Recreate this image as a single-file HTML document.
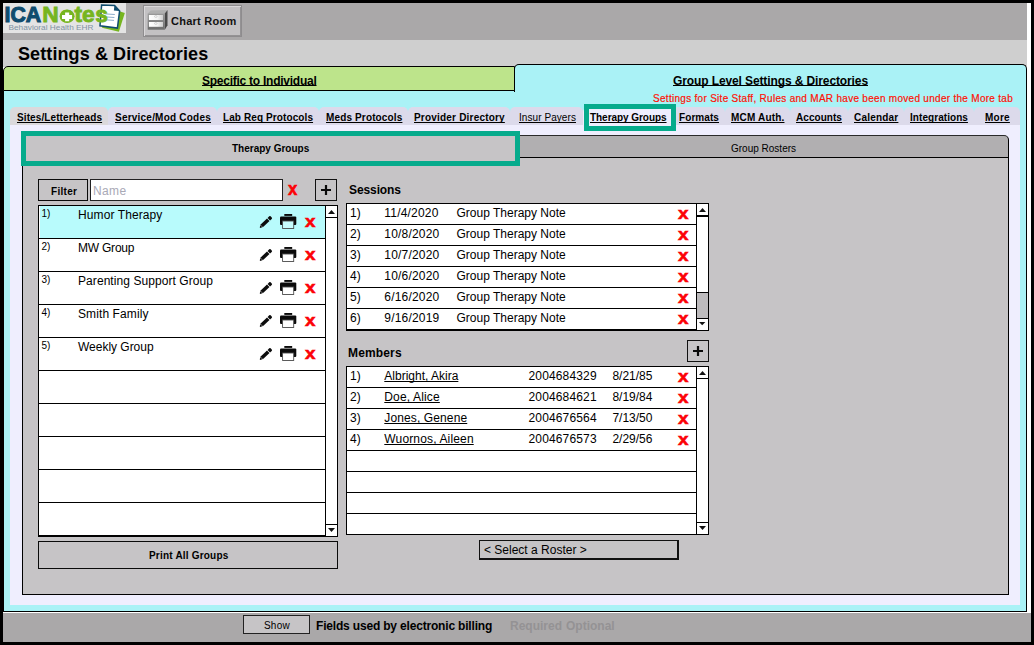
<!DOCTYPE html>
<html><head><meta charset="utf-8"><title>Settings &amp; Directories</title>
<style>
*{box-sizing:border-box;margin:0;padding:0}
html,body{width:1034px;height:645px;overflow:hidden;background:#000}
body{position:relative;font-family:"Liberation Sans",Arial,sans-serif;font-size:12px;color:#000}
.abs{position:absolute}
.t{position:absolute;white-space:nowrap;line-height:1}
.b{font-weight:bold}
.u{text-decoration:underline;text-underline-offset:0px;text-decoration-thickness:1px;text-decoration-skip-ink:none}
.n12.u{text-underline-offset:1px}
#white{left:3px;top:3px;width:1028px;height:610px;background:#fff}
#topbar{left:3px;top:3px;width:1024px;height:37px;background:#aaa8a9}
#logo{left:3px;top:3px;width:123px;height:30px;background:#e4e4e4;overflow:hidden}
#chart{left:143px;top:5px;width:99px;height:32px;background:#c3c1c3;border:1px solid #8e8c8e;box-shadow:inset 1px 1px 0 #dad8da,inset -1px -1px 0 #949294}
#titlebar{left:3px;top:40px;width:1024px;height:27px;background:#cfcfcf}
#cyan{left:3px;top:90px;width:1024px;height:522px;background:#aaf2f6;border:1px solid #000;border-top:none}
#cyantab{left:514px;top:64px;width:513px;height:28px;background:#aaf2f6;border:1px solid #000;border-bottom:none;border-radius:5px 5px 0 0}
#greentab{left:3px;top:66px;width:512px;height:25px;background:#bde48b;border:1px solid #000;border-radius:5px 0 0 0}
#lav{left:10px;top:125px;width:1010px;height:480px;background:#efeefe}
.tab{position:absolute;top:107px;height:18px;background:#dcdaeb;border-radius:5px 5px 0 0}
.tab.sel{background:#efeefe}
.tl{position:absolute;top:113px;font-size:10px;font-weight:bold;text-decoration:underline;text-decoration-skip-ink:none;white-space:nowrap;line-height:1}
#panel{left:22px;top:157px;width:987px;height:438px;background:#c6c4c6;border:1px solid #000}
#sub1{left:22px;top:135px;width:494px;height:23px;background:#c6c4c6;border:1px solid #000;border-bottom:none}
#sub2{left:515px;top:135px;width:494px;height:22px;background:#b1afb1;border:1px solid #000;border-top-color:#2a2a2a;border-bottom:none;border-radius:0 5px 0 0}
.hl{position:absolute;border:5px solid #06ab8c}
.btn{position:absolute;background:#c6c4c6;border:1px solid #0a0a0a}
.list{position:absolute;background:#fff;border:1px solid #000;overflow:hidden}
.row{position:absolute;left:0;border-bottom:1px solid #000}
.sb{position:absolute;top:0;right:0;width:12px;height:100%;border-left:1px solid #000;background:#fff}
.rx{position:absolute;color:#fc0206;font-weight:bold;line-height:1;-webkit-text-stroke:0.6px #fc0206}

.n9{position:absolute;font-size:10px;line-height:1;white-space:nowrap}
.n12{position:absolute;font-size:12px;line-height:1;white-space:nowrap}
.arrbox{position:absolute;left:0;width:11px;height:12px;background:#fff}
svg{position:absolute;overflow:visible}
</style></head><body>
<div id="white" class="abs"></div>
<div id="topbar" class="abs"></div>
<div id="logo" class="abs"><svg style="left:0;top:0" width="123" height="30" viewBox="3 3 123 30">
<path d="M119.5 11.3 L124.8 12.9 L118.9 31.8 L102 27.8 L103 25 Z" fill="#76b51f"/>
<path d="M101.6 5 L114.6 5.6 L119.6 10.9 L117.4 28.1 L100 25.8 Z" fill="#fff" stroke="#0f4c6e" stroke-width="1.5" stroke-linejoin="miter"/>
<path d="M114.4 5.6 L113.9 10.4 L119.4 11 Z" fill="#0f4c6e"/>
<path d="M105.2 13.9 L114.8 14.5 M107 17 L114.4 17.5 M107.2 19.9 L114 20.4" stroke="#7fa3c4" stroke-width="0.9" fill="none"/>
<text x="4.5" y="22.2" style="font:bold 22.2px 'Liberation Sans',Arial,sans-serif" fill="#0f4c6e" stroke="#0f4c6e" stroke-width="1.1" textLength="36.6" lengthAdjust="spacingAndGlyphs">ICA</text>
<text x="42.3 60 74.6 82.1 95.3" y="22.1" style="font:bold 22.8px 'Liberation Sans',Arial,sans-serif" fill="#76b51f" stroke="#76b51f" stroke-width="0.9">Notes</text>
<ellipse cx="67.1" cy="16.3" rx="7.5" ry="6.6" fill="#76b51f"/>
<path d="M65.1 12.4h4.1v2.5h2.9v4.2h-2.9v2.1h-4.1v-2.1h-3.1v-4.2h3.1z" fill="#fff"/>
<text x="8.5" y="29.8" style="font:7.4px 'Liberation Sans',Arial,sans-serif" fill="#8193a3" textLength="85" lengthAdjust="spacingAndGlyphs">Behavioral Health EHR</text>
</svg></div>
<div id="chart" class="abs"></div>
<svg style="left:143px;top:5px" width="30" height="32" viewBox="143 5 30 32">
<defs><linearGradient id="cf" x1="0" y1="0" x2="0" y2="1"><stop offset="0" stop-color="#9a9a9a"/><stop offset="1" stop-color="#6c6c6c"/></linearGradient>
<linearGradient id="cd" x1="0" y1="0" x2="1" y2="0"><stop offset="0" stop-color="#fff"/><stop offset="0.6" stop-color="#f4f4f4"/><stop offset="1" stop-color="#cfcfcf"/></linearGradient></defs>
<path d="M147.7 13.5 L150.7 10.5 L167.5 10 L164.8 13.5 Z" fill="#b0b0b0"/>
<path d="M164.8 13.5 L167.5 10 L167.5 25.3 L164.8 29.7 Z" fill="#484848"/>
<rect x="147.7" y="13.5" width="17.1" height="16.2" fill="url(#cf)"/>
<rect x="148.9" y="15" width="14.1" height="5" fill="url(#cd)"/>
<rect x="148.9" y="22" width="14.1" height="4.8" fill="url(#cd)"/>
<rect x="154.6" y="15.6" width="2.4" height="1.7" rx="0.8" fill="#fff" stroke="#aaa" stroke-width="0.5"/>
<rect x="154.6" y="22.6" width="2.4" height="1.7" rx="0.8" fill="#fff" stroke="#aaa" stroke-width="0.5"/>
</svg>
<div class="t b" style="left:171px;top:16px;font-size:11px;letter-spacing:0.25px;color:#111">Chart Room</div>
<div id="titlebar" class="abs"></div>
<div class="t b" style="left:18px;top:45px;font-size:18px;letter-spacing:0.1px">Settings &amp; Directories</div>
<div id="cyan" class="abs"></div>
<div id="cyantab" class="abs"></div>
<div id="greentab" class="abs"></div>
<div id="lav" class="abs"></div>
<div class="tab" style="left:10px;width:98px;background:#dbd9dc"></div>
<div class="tl" style="left:17px;letter-spacing:0.1px">Sites/Letterheads</div>
<div class="tab" style="left:108px;width:109px"></div>
<div class="tl" style="left:115px;letter-spacing:0.22px">Service/Mod Codes</div>
<div class="tab" style="left:217px;width:102px"></div>
<div class="tl" style="left:223px;letter-spacing:0.1px">Lab Req Protocols</div>
<div class="tab" style="left:319px;width:89px"></div>
<div class="tl" style="left:326px;letter-spacing:0.14px">Meds Protocols</div>
<div class="tab" style="left:408px;width:102px"></div>
<div class="tl" style="left:414px;letter-spacing:0.2px">Provider Directory</div>
<div class="tab" style="left:510px;width:73px"></div>
<div class="tl" style="left:519px;font-weight:normal;letter-spacing:0.07px">Insur Payers</div>
<div class="tab sel" style="left:583px;width:90px"></div>
<div class="tl" style="left:590px;letter-spacing:-0.05px">Therapy Groups</div>
<div class="tab" style="left:673px;width:52px"></div>
<div class="tl" style="left:679px;letter-spacing:0.08px">Formats</div>
<div class="tab" style="left:725px;width:65px"></div>
<div class="tl" style="left:731px;letter-spacing:0.18px">MCM Auth.</div>
<div class="tab" style="left:790px;width:58px"></div>
<div class="tl" style="left:796px;letter-spacing:0.05px">Accounts</div>
<div class="tab" style="left:848px;width:56px"></div>
<div class="tl" style="left:854px;letter-spacing:0.2px">Calendar</div>
<div class="tab" style="left:904px;width:70px"></div>
<div class="tl" style="left:910px;letter-spacing:0.06px">Integrations</div>
<div class="tab" style="left:974px;width:46px"></div>
<div class="tl" style="left:985px;letter-spacing:0.25px">More</div>
<div id="panel" class="abs"></div>
<div id="sub1" class="abs"></div>
<div id="sub2" class="abs"></div>

<div class="t b u" style="left:202px;top:75px;font-size:12px;letter-spacing:-0.25px">Specific to Individual</div>
<div class="t b u" style="left:673px;top:75px;font-size:12px;letter-spacing:-0.11px">Group Level Settings &amp; Directories</div>
<div class="t" style="left:653px;top:94px;font-size:10px;letter-spacing:0.29px;color:#ff1206;-webkit-text-stroke:0.2px #ff1206">Settings for Site Staff, Rules and MAR have been moved under the More tab</div>
<div class="hl" style="left:584px;top:104px;width:92px;height:27px"></div>
<div class="hl" style="left:21px;top:131px;width:499px;height:35px"></div>
<div class="t b" style="left:232px;top:144px;font-size:10px">Therapy Groups</div>
<div class="t" style="left:731px;top:144px;font-size:10px">Group Rosters</div>
<div class="btn" style="left:38px;top:179px;width:50px;height:22px"></div>
<div class="t b" style="left:51px;top:187px;font-size:10px;letter-spacing:0.3px">Filter</div>
<div class="abs" style="left:90px;top:179px;width:193px;height:22px;background:#fff;border:1px solid #222"></div>
<div class="t" style="left:93px;top:185px;font-size:12px;letter-spacing:0.35px;color:#a9a9b6">Name</div>
<div class="rx" style="left:288px;top:180px;font-size:18px;transform:scaleX(0.93);transform-origin:0 0">x</div>
<div class="btn" style="left:315px;top:179px;width:22px;height:22px;border:1.5px solid #111"></div>
<svg style="left:321px;top:185px" width="10" height="10" viewBox="0 0 10 10"><path d="M3.9 0h2.2v3.9h3.9v2.2h-3.9v3.9h-2.2v-3.9h-3.9v-2.2h3.9z" fill="#0a0a0a"/></svg>
<div class="list" style="left:38px;top:205px;width:300px;height:332px">
<div class="row" style="top:0px;width:288px;height:33px;background:#b8fbfc;box-shadow:inset 1px 0 0 #fff">
<div class="n9" style="left:2.5px;top:3px">1)</div>
<div class="n12" style="left:39px;top:3px;letter-spacing:0.1px">Humor Therapy</div>
<svg style="left:0;top:0" width="1" height="1"><g transform="translate(221.2 21.4) rotate(-43.6)"><path d="M-0.2 -0.5L2.7 -1.8L11.1 -1.8L11.1 1.8L2.7 1.8L-0.2 0.5Z" fill="#0c0c0c"/><path d="M11.9 -1.8L14.2 -1.8Q15.2 -1.8 15.2 -0.8L15.2 0.8Q15.2 1.8 14.2 1.8L11.9 1.8Z" fill="#0c0c0c"/><path d="M1.9 -1.2L1.9 1.2" stroke="#eee" stroke-width="0.5" fill="none"/></g></svg>
<svg style="left:241px;top:8px" width="16.3" height="15" viewBox="0 0 17 15" preserveAspectRatio="none"><rect x="4.5" y="0" width="8.2" height="1.9" fill="#0a0a0a"/><rect x="0" y="2.4" width="17" height="8.6" rx="1.1" fill="#0a0a0a"/><rect x="2.7" y="7" width="11.6" height="7.5" fill="#c8fcfc" stroke="#4a4a4a" stroke-width="0.9"/></svg>
<div class="rx" style="left:266.2px;top:7px;font-size:17px;transform:translateY(-0.5px) scaleX(1.11);transform-origin:0 0">x</div>
</div>
<div class="row" style="top:33px;width:288px;height:33px;background:#fff">
<div class="n9" style="left:2.5px;top:3px">2)</div>
<div class="n12" style="left:39px;top:3px;letter-spacing:-0.22px">MW Group</div>
<svg style="left:0;top:0" width="1" height="1"><g transform="translate(221.2 21.4) rotate(-43.6)"><path d="M-0.2 -0.5L2.7 -1.8L11.1 -1.8L11.1 1.8L2.7 1.8L-0.2 0.5Z" fill="#0c0c0c"/><path d="M11.9 -1.8L14.2 -1.8Q15.2 -1.8 15.2 -0.8L15.2 0.8Q15.2 1.8 14.2 1.8L11.9 1.8Z" fill="#0c0c0c"/><path d="M1.9 -1.2L1.9 1.2" stroke="#eee" stroke-width="0.5" fill="none"/></g></svg>
<svg style="left:241px;top:8px" width="16.3" height="15" viewBox="0 0 17 15" preserveAspectRatio="none"><rect x="4.5" y="0" width="8.2" height="1.9" fill="#0a0a0a"/><rect x="0" y="2.4" width="17" height="8.6" rx="1.1" fill="#0a0a0a"/><rect x="2.7" y="7" width="11.6" height="7.5" fill="#fff" stroke="#4a4a4a" stroke-width="0.9"/></svg>
<div class="rx" style="left:266.2px;top:7px;font-size:17px;transform:translateY(-0.5px) scaleX(1.11);transform-origin:0 0">x</div>
</div>
<div class="row" style="top:66px;width:288px;height:33px;background:#fff">
<div class="n9" style="left:2.5px;top:3px">3)</div>
<div class="n12" style="left:39px;top:3px;letter-spacing:0.07px">Parenting Support Group</div>
<svg style="left:0;top:0" width="1" height="1"><g transform="translate(221.2 21.4) rotate(-43.6)"><path d="M-0.2 -0.5L2.7 -1.8L11.1 -1.8L11.1 1.8L2.7 1.8L-0.2 0.5Z" fill="#0c0c0c"/><path d="M11.9 -1.8L14.2 -1.8Q15.2 -1.8 15.2 -0.8L15.2 0.8Q15.2 1.8 14.2 1.8L11.9 1.8Z" fill="#0c0c0c"/><path d="M1.9 -1.2L1.9 1.2" stroke="#eee" stroke-width="0.5" fill="none"/></g></svg>
<svg style="left:241px;top:8px" width="16.3" height="15" viewBox="0 0 17 15" preserveAspectRatio="none"><rect x="4.5" y="0" width="8.2" height="1.9" fill="#0a0a0a"/><rect x="0" y="2.4" width="17" height="8.6" rx="1.1" fill="#0a0a0a"/><rect x="2.7" y="7" width="11.6" height="7.5" fill="#fff" stroke="#4a4a4a" stroke-width="0.9"/></svg>
<div class="rx" style="left:266.2px;top:7px;font-size:17px;transform:translateY(-0.5px) scaleX(1.11);transform-origin:0 0">x</div>
</div>
<div class="row" style="top:99px;width:288px;height:33px;background:#fff">
<div class="n9" style="left:2.5px;top:3px">4)</div>
<div class="n12" style="left:39px;top:3px;letter-spacing:0.1px">Smith Family</div>
<svg style="left:0;top:0" width="1" height="1"><g transform="translate(221.2 21.4) rotate(-43.6)"><path d="M-0.2 -0.5L2.7 -1.8L11.1 -1.8L11.1 1.8L2.7 1.8L-0.2 0.5Z" fill="#0c0c0c"/><path d="M11.9 -1.8L14.2 -1.8Q15.2 -1.8 15.2 -0.8L15.2 0.8Q15.2 1.8 14.2 1.8L11.9 1.8Z" fill="#0c0c0c"/><path d="M1.9 -1.2L1.9 1.2" stroke="#eee" stroke-width="0.5" fill="none"/></g></svg>
<svg style="left:241px;top:8px" width="16.3" height="15" viewBox="0 0 17 15" preserveAspectRatio="none"><rect x="4.5" y="0" width="8.2" height="1.9" fill="#0a0a0a"/><rect x="0" y="2.4" width="17" height="8.6" rx="1.1" fill="#0a0a0a"/><rect x="2.7" y="7" width="11.6" height="7.5" fill="#fff" stroke="#4a4a4a" stroke-width="0.9"/></svg>
<div class="rx" style="left:266.2px;top:7px;font-size:17px;transform:translateY(-0.5px) scaleX(1.11);transform-origin:0 0">x</div>
</div>
<div class="row" style="top:132px;width:288px;height:33px;background:#fff">
<div class="n9" style="left:2.5px;top:3px">5)</div>
<div class="n12" style="left:39px;top:3px;letter-spacing:-0.02px">Weekly Group</div>
<svg style="left:0;top:0" width="1" height="1"><g transform="translate(221.2 21.4) rotate(-43.6)"><path d="M-0.2 -0.5L2.7 -1.8L11.1 -1.8L11.1 1.8L2.7 1.8L-0.2 0.5Z" fill="#0c0c0c"/><path d="M11.9 -1.8L14.2 -1.8Q15.2 -1.8 15.2 -0.8L15.2 0.8Q15.2 1.8 14.2 1.8L11.9 1.8Z" fill="#0c0c0c"/><path d="M1.9 -1.2L1.9 1.2" stroke="#eee" stroke-width="0.5" fill="none"/></g></svg>
<svg style="left:241px;top:8px" width="16.3" height="15" viewBox="0 0 17 15" preserveAspectRatio="none"><rect x="4.5" y="0" width="8.2" height="1.9" fill="#0a0a0a"/><rect x="0" y="2.4" width="17" height="8.6" rx="1.1" fill="#0a0a0a"/><rect x="2.7" y="7" width="11.6" height="7.5" fill="#fff" stroke="#4a4a4a" stroke-width="0.9"/></svg>
<div class="rx" style="left:266.2px;top:7px;font-size:17px;transform:translateY(-0.5px) scaleX(1.11);transform-origin:0 0">x</div>
</div>
<div class="row" style="top:165px;width:288px;height:33px;background:#fff">
</div>
<div class="row" style="top:198px;width:288px;height:33px;background:#fff">
</div>
<div class="row" style="top:231px;width:288px;height:33px;background:#fff">
</div>
<div class="row" style="top:264px;width:288px;height:33px;background:#fff">
</div>
<div class="row" style="top:297px;width:288px;height:33px;background:#fff">
</div>
<div class="sb"><svg style="left:2px;top:4px" width="7" height="4" viewBox="0 0 7 4"><path d="M0 4L3.5 0L7 4Z" fill="#111"/></svg><div class="abs" style="left:0;top:11px;width:11px;height:1px;background:#000"></div><svg style="left:2px;bottom:4px" width="7" height="4" viewBox="0 0 7 4"><path d="M0 0L3.5 4L7 0Z" fill="#111"/></svg><div class="abs" style="left:0;bottom:11px;width:11px;height:1px;background:#000"></div></div>
</div>
<div class="btn" style="left:38px;top:541px;width:300px;height:28px"></div>
<div class="t b" style="left:149px;top:551px;font-size:10px;letter-spacing:0.2px">Print All Groups</div>
<div class="t b" style="left:349px;top:184px;font-size:12px;letter-spacing:-0.1px">Sessions</div>
<div class="list" style="left:346px;top:203px;width:363px;height:128px">
<div class="row" style="top:0px;width:350px;height:21px;background:#fff">
<div class="n12" style="left:3px;top:3px">1)</div>
<div class="n12" style="left:37.3px;top:3px;letter-spacing:0.2px">11/4/2020</div>
<div class="n12" style="left:109.5px;top:3px">Group Therapy Note</div>
<div class="rx" style="left:331.2px;top:1px;font-size:17px;transform:translateY(-0.5px) scaleX(1.11);transform-origin:0 0">x</div>
</div>
<div class="row" style="top:21px;width:350px;height:21px;background:#fff">
<div class="n12" style="left:3px;top:3px">2)</div>
<div class="n12" style="left:37.3px;top:3px;letter-spacing:0.2px">10/8/2020</div>
<div class="n12" style="left:109.5px;top:3px">Group Therapy Note</div>
<div class="rx" style="left:331.2px;top:1px;font-size:17px;transform:translateY(-0.5px) scaleX(1.11);transform-origin:0 0">x</div>
</div>
<div class="row" style="top:42px;width:350px;height:21px;background:#fff">
<div class="n12" style="left:3px;top:3px">3)</div>
<div class="n12" style="left:37.3px;top:3px;letter-spacing:0.2px">10/7/2020</div>
<div class="n12" style="left:109.5px;top:3px">Group Therapy Note</div>
<div class="rx" style="left:331.2px;top:1px;font-size:17px;transform:translateY(-0.5px) scaleX(1.11);transform-origin:0 0">x</div>
</div>
<div class="row" style="top:63px;width:350px;height:21px;background:#fff">
<div class="n12" style="left:3px;top:3px">4)</div>
<div class="n12" style="left:37.3px;top:3px;letter-spacing:0.2px">10/6/2020</div>
<div class="n12" style="left:109.5px;top:3px">Group Therapy Note</div>
<div class="rx" style="left:331.2px;top:1px;font-size:17px;transform:translateY(-0.5px) scaleX(1.11);transform-origin:0 0">x</div>
</div>
<div class="row" style="top:84px;width:350px;height:21px;background:#fff">
<div class="n12" style="left:3px;top:3px">5)</div>
<div class="n12" style="left:37.3px;top:3px;letter-spacing:0.2px">6/16/2020</div>
<div class="n12" style="left:109.5px;top:3px">Group Therapy Note</div>
<div class="rx" style="left:331.2px;top:1px;font-size:17px;transform:translateY(-0.5px) scaleX(1.11);transform-origin:0 0">x</div>
</div>
<div class="row" style="top:105px;width:350px;height:21px;background:#fff">
<div class="n12" style="left:3px;top:3px">6)</div>
<div class="n12" style="left:37.3px;top:3px;letter-spacing:0.2px">9/16/2019</div>
<div class="n12" style="left:109.5px;top:3px">Group Therapy Note</div>
<div class="rx" style="left:331.2px;top:1px;font-size:17px;transform:translateY(-0.5px) scaleX(1.11);transform-origin:0 0">x</div>
</div>
<div class="sb"><svg style="left:2px;top:4px" width="7" height="4" viewBox="0 0 7 4"><path d="M0 4L3.5 0L7 4Z" fill="#111"/></svg><div class="abs" style="left:0;top:11px;width:11px;height:2px;background:#000"></div><div class="abs" style="left:0;top:88px;width:11px;height:27px;background:#bdbbbd;border-top:1px solid #000;border-bottom:1px solid #000"></div><svg style="left:2.3px;bottom:4.3px" width="6.4" height="3.4" viewBox="0 0 6 3"><path d="M0 0L3 3L6 0Z" fill="#111"/></svg></div>
</div>
<div class="t b" style="left:348px;top:347px;font-size:12px;letter-spacing:0.15px">Members</div>
<div class="btn" style="left:687px;top:340px;width:22px;height:22px;border:1.5px solid #111"></div>
<svg style="left:693px;top:346px" width="10" height="10" viewBox="0 0 10 10"><path d="M3.9 0h2.2v3.9h3.9v2.2h-3.9v3.9h-2.2v-3.9h-3.9v-2.2h3.9z" fill="#0a0a0a"/></svg>
<div class="list" style="left:346px;top:366px;width:363px;height:169px">
<div class="row" style="top:0px;width:350px;height:21px;background:#fff">
<div class="n12" style="left:3px;top:3px">1)</div>
<div class="n12 u" style="left:37.3px;top:3px">Albright, Akira</div>
<div class="n12" style="left:181.5px;top:3px;letter-spacing:0.15px">2004684329</div>
<div class="n12" style="left:265.4px;top:3px">8/21/85</div>
<div class="rx" style="left:331.2px;top:1px;font-size:17px;transform:translateY(-0.5px) scaleX(1.11);transform-origin:0 0">x</div>
</div>
<div class="row" style="top:21px;width:350px;height:21px;background:#fff">
<div class="n12" style="left:3px;top:3px">2)</div>
<div class="n12 u" style="left:37.3px;top:3px;letter-spacing:0.15px">Doe, Alice</div>
<div class="n12" style="left:181.5px;top:3px;letter-spacing:0.15px">2004684621</div>
<div class="n12" style="left:265.4px;top:3px">8/19/84</div>
<div class="rx" style="left:331.2px;top:1px;font-size:17px;transform:translateY(-0.5px) scaleX(1.11);transform-origin:0 0">x</div>
</div>
<div class="row" style="top:42px;width:350px;height:21px;background:#fff">
<div class="n12" style="left:3px;top:3px">3)</div>
<div class="n12 u" style="left:37.3px;top:3px;letter-spacing:0.12px">Jones, Genene</div>
<div class="n12" style="left:181.5px;top:3px;letter-spacing:0.15px">2004676564</div>
<div class="n12" style="left:265.4px;top:3px">7/13/50</div>
<div class="rx" style="left:331.2px;top:1px;font-size:17px;transform:translateY(-0.5px) scaleX(1.11);transform-origin:0 0">x</div>
</div>
<div class="row" style="top:63px;width:350px;height:21px;background:#fff">
<div class="n12" style="left:3px;top:3px">4)</div>
<div class="n12 u" style="left:37.3px;top:3px;letter-spacing:0.15px">Wuornos, Aileen</div>
<div class="n12" style="left:181.5px;top:3px;letter-spacing:0.15px">2004676573</div>
<div class="n12" style="left:265.4px;top:3px">2/29/56</div>
<div class="rx" style="left:331.2px;top:1px;font-size:17px;transform:translateY(-0.5px) scaleX(1.11);transform-origin:0 0">x</div>
</div>
<div class="row" style="top:84px;width:350px;height:21px;background:#fff">
</div>
<div class="row" style="top:105px;width:350px;height:21px;background:#fff">
</div>
<div class="row" style="top:126px;width:350px;height:21px;background:#fff">
</div>
<div class="row" style="top:147px;width:350px;height:21px;background:#fff">
</div>
<div class="sb"><svg style="left:2px;top:4px" width="7" height="4" viewBox="0 0 7 4"><path d="M0 4L3.5 0L7 4Z" fill="#111"/></svg><div class="abs" style="left:0;top:11px;width:11px;height:1px;background:#000"></div><svg style="left:2px;bottom:4px" width="7" height="4" viewBox="0 0 7 4"><path d="M0 0L3.5 4L7 0Z" fill="#111"/></svg><div class="abs" style="left:0;bottom:11px;width:11px;height:1px;background:#000"></div></div>
</div>
<div class="abs" style="left:479px;top:540px;width:200px;height:20px;background:#c6c4c6;border:1px solid #111;border-right-width:2px;border-bottom-width:2px"></div>
<div class="t" style="left:484px;top:544px;font-size:12px">&lt; Select a Roster &gt;</div>
<div class="abs" style="left:3px;top:613px;width:1028px;height:29px;background:#aaa8a9"></div>
<div class="btn" style="left:243px;top:615px;width:67px;height:19px;border-color:#222"></div>
<div class="t" style="left:264px;top:621px;font-size:10px;letter-spacing:0.2px">Show</div>
<div class="t b" style="left:316px;top:620px;font-size:12px;letter-spacing:-0.18px">Fields used by electronic billing</div>
<div class="t b" style="left:510px;top:620px;font-size:12px;color:#949294">Required</div>
<div class="t b" style="left:566px;top:620px;font-size:12px;color:#949294">Optional</div>
</body></html>
